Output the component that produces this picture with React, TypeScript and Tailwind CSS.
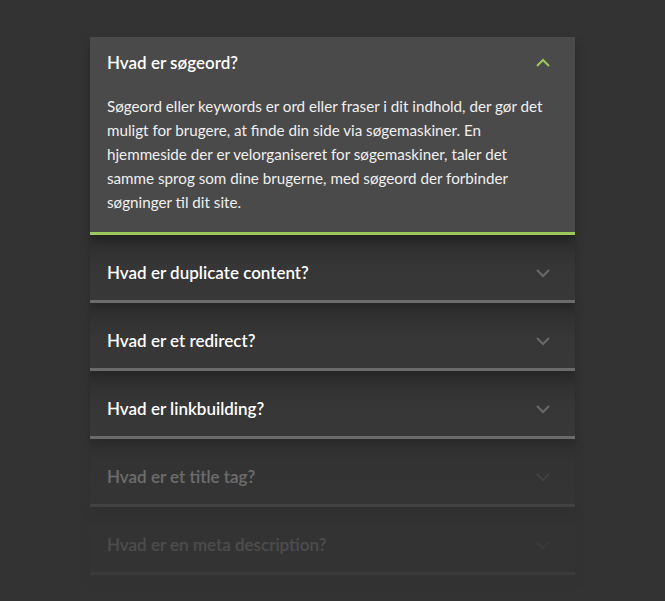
import React from "react";

type Item = { q: string; a?: string; fade?: string };

const ITEMS: Item[] = [
  {
    q: "Hvad er søgeord?",
    a: "Søgeord eller keywords er ord eller fraser i dit indhold, der gør det muligt for brugere, at finde din side via søgemaskiner. En hjemmeside der er velorganiseret for søgemaskiner, taler det samme sprog som dine brugerne, med søgeord der forbinder søgninger til dit site.",
  },
  { q: "Hvad er duplicate content?" },
  { q: "Hvad er et redirect?" },
  { q: "Hvad er linkbuilding?" },
  { q: "Hvad er et title tag?", fade: "opacity-[0.28]" },
  { q: "Hvad er en meta description?", fade: "opacity-[0.12]" },
];

function Chevron({ up }: { up?: boolean }) {
  return (
    <svg width="16" height="10" viewBox="0 0 16 10" className="shrink-0">
      <path
        d={up ? "M2 8 L8 2 L14 8" : "M2 2 L8 8 L14 2"}
        fill="none"
        stroke={up ? "#9cc85c" : "#6a6a6a"}
        strokeWidth="2"
      />
    </svg>
  );
}

export default function App() {
  return (
    <div
      className="min-h-[601px] w-full bg-[#333333] pt-[37px]"
      style={{ fontFamily: '"Source Sans Pro", Lato, "Noto Sans", sans-serif' }}
    >
      <div className="mx-auto flex w-[485px] flex-col">
        {ITEMS.map((item, i) =>
          item.a ? (
            <div
              key={i}
              className="relative z-10 border-b-[3px] border-[#9cc85c] bg-[#4a4a4a] shadow-[0_6px_10px_rgba(0,0,0,0.25)]"
            >
              <div className="flex items-center justify-between pl-[17px] pr-[24px] pt-[15px] pb-[15px]">
                <span className="text-[17px] leading-[22px] font-semibold text-white">{item.q}</span>
                <Chevron up />
              </div>
              <p className="pl-[17px] pr-[29px] pt-[5px] pb-[18px] text-[15.2px] leading-[24px] text-[#f0f0f0]">
                {item.a}
              </p>
            </div>
          ) : (
            <div
              key={i}
              className={`relative border-b-[3px] border-[#6b6b6b] bg-gradient-to-b from-[#2d2d2d] via-[#363636] to-[#383838] shadow-[0_6px_10px_rgba(0,0,0,0.18)] ${item.fade ?? ""}`}
              style={{ zIndex: 9 - i }}
            >
              <div className="flex items-center justify-between pl-[17px] pr-[24px] pt-[27px] pb-[16px]">
                <span className="text-[17px] leading-[22px] font-semibold text-white">{item.q}</span>
                <Chevron />
              </div>
            </div>
          )
        )}
      </div>
    </div>
  );
}
